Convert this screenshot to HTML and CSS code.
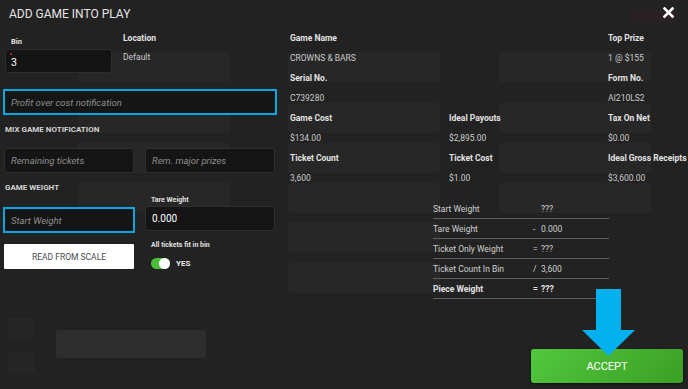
FILE: index.html
```html
<!DOCTYPE html>
<html lang="en">
  <head>
    <title>Add Game Into Play</title>
    <meta charset="UTF-8" />
    <meta name="viewport" content="width=device-width, initial-scale=1.0" />
    <link rel="stylesheet" href="styles.css">
  </head>
  <body>
    <!-- dimmed page behind the modal -->
    <div class="backdrop">
      <div class="ghost" style="left:78px;top:52px"></div>
      <div class="ghost" style="left:78px;top:103px"></div>
      <div class="ghost" style="left:78px;top:143px"></div>
      <div class="ghost" style="left:78px;top:182px"></div>
      <div class="ghost" style="left:288px;top:52px"></div>
      <div class="ghost" style="left:288px;top:103px"></div>
      <div class="ghost" style="left:288px;top:143px"></div>
      <div class="ghost" style="left:288px;top:183px"></div>
      <div class="ghost" style="left:288px;top:222px"></div>
      <div class="ghost" style="left:288px;top:263px"></div>
      <div class="ghost" style="left:499px;top:52px"></div>
      <div class="ghost" style="left:499px;top:103px"></div>
      <div class="ghost" style="left:499px;top:143px"></div>
      <div class="ghost" style="left:499px;top:183px"></div>
      <div class="ghost light" style="left:56px;top:330px"></div>
      <div class="ghost small" style="left:8px;top:318px"></div>
      <div class="ghost small" style="left:8px;top:352px"></div>
      <div class="ghost red" style="left:630px;top:10px"></div>
    </div>

    <div class="modal">
      <header class="modal-head">
        <h1>ADD GAME INTO PLAY</h1>
        <button class="close" aria-label="Close">
          <svg width="11" height="11" viewBox="0 0 11 11">
            <path d="M1.5 1.5 L9.5 9.5 M9.5 1.5 L1.5 9.5" stroke="#fff" stroke-width="2.6" stroke-linecap="square" />
          </svg>
        </button>
      </header>

      <div class="modal-body">
        <section class="form-col">
          <div class="row-top">
            <div class="bin-field">
              <label for="bin">Bin</label>
              <div class="bin-box">
                <span class="req"></span>
                <input type="text" id="bin" value="3" />
              </div>
            </div>
            <div class="loc-field">
              <div class="lbl">Location</div>
              <div class="val">Default</div>
            </div>
          </div>

          <input class="field wide focus" type="text" placeholder="Profit over cost notification" />

          <h2>MIX GAME NOTIFICATION</h2>
          <div class="pair">
            <input class="field" type="text" placeholder="Remaining tickets" />
            <input class="field" type="text" placeholder="Rem. major prizes" />
          </div>

          <h2>GAME WEIGHT</h2>
          <div class="pair weight">
            <div class="stack">
              <input class="field focus start" type="text" placeholder="Start Weight" />
              <button class="scale-btn">READ FROM SCALE</button>
            </div>
            <div class="stack">
              <label class="mini" for="tare">Tare Weight</label>
              <input class="field tare" id="tare" type="text" value="0.000" />
              <div class="mini fit">All tickets fit in bin</div>
              <div class="toggle-row">
                <span class="toggle"><span class="knob"></span></span>
                <span class="yes">YES</span>
              </div>
            </div>
          </div>
        </section>

        <section class="info-col">
          <div class="info-grid">
            <div class="cell"><div class="lbl">Game Name</div><div class="val">CROWNS &amp; BARS</div></div>
            <div class="cell"></div>
            <div class="cell"><div class="lbl">Top Prize</div><div class="val">1 @ $155</div></div>

            <div class="cell"><div class="lbl">Serial No.</div><div class="val">C739280</div></div>
            <div class="cell"></div>
            <div class="cell"><div class="lbl">Form No.</div><div class="val">AI210LS2</div></div>

            <div class="cell"><div class="lbl">Game Cost</div><div class="val">$134.00</div></div>
            <div class="cell"><div class="lbl">Ideal Payouts</div><div class="val">$2,895.00</div></div>
            <div class="cell"><div class="lbl">Tax On Net</div><div class="val">$0.00</div></div>

            <div class="cell"><div class="lbl">Ticket Count</div><div class="val">3,600</div></div>
            <div class="cell"><div class="lbl">Ticket Cost</div><div class="val">$1.00</div></div>
            <div class="cell"><div class="lbl">Ideal Gross Receipts</div><div class="val">$3,600.00</div></div>
          </div>

          <div class="calc">
            <div class="calc-row"><span class="name">Start Weight</span><span class="op"></span><span>???</span></div>
            <div class="calc-row"><span class="name">Tare Weight</span><span class="op">-</span><span>0.000</span></div>
            <div class="calc-row"><span class="name">Ticket Only Weight</span><span class="op">=</span><span>???</span></div>
            <div class="calc-row"><span class="name">Ticket Count In Bin</span><span class="op">/</span><span>3,600</span></div>
            <div class="calc-row total"><span class="name">Piece Weight</span><span class="op">=</span><span>???</span></div>
          </div>
        </section>
      </div>

      <footer class="modal-foot">
        <button class="accept">ACCEPT</button>
      </footer>

      <svg class="arrow" width="53" height="67" viewBox="0 0 53 67">
        <rect x="14" y="0" width="25" height="42" fill="#03b1ef" />
        <polygon points="0,41 53,41 26.5,67" fill="#03b1ef" />
      </svg>
    </div>
  </body>
</html>
```

FILE: styles.css
```css
body {
  font-family: Roboto, "Liberation Sans", sans-serif;
  margin: 0;
  background-color: #222;
  color: #d6d6d6;
  height: 100vh;
  overflow: hidden;
  position: relative;
}
.backdrop {
  position: absolute;
  inset: 0;
}
.ghost {
  position: absolute;
  width: 152px;
  height: 30px;
  background-color: #272727;
  border-radius: 2px;
}
.ghost.light {
  width: 150px;
  height: 28px;
  background-color: #2d2d2d;
}
.ghost.small {
  width: 27px;
  height: 21px;
  background-color: #262626;
}
.ghost.red {
  width: 48px;
  height: 12px;
  background-color: #2b2123;
}

.modal {
  position: relative;
  height: 100vh;
  display: flex;
  flex-direction: column;
}
.modal-head {
  height: 28px;
  display: flex;
  align-items: center;
  justify-content: space-between;
  padding: 0 14px 0 9px;
}
h1 {
  margin: 0;
  font-size: 12px;
  font-weight: 400;
  color: #e4e4e4;
}
.close {
  background: none;
  border: none;
  padding: 0;
  margin-top: -4px;
  display: flex;
}

.modal-body {
  display: flex;
}
.form-col {
  width: 272px;
  padding-left: 4px;
  display: flex;
  flex-direction: column;
}
.row-top {
  display: flex;
  padding-top: 4px;
}
.bin-field {
  width: 119px;
  display: flex;
  flex-direction: column;
}
.bin-field label {
  margin: 5px 0 0 7px;
  font-size: 7.5px;
  font-weight: 700;
  line-height: 10px;
  color: #e0e0e0;
}
.bin-box {
  position: relative;
  margin: 2px 0 0 1px;
  width: 107px;
  height: 24px;
  box-sizing: border-box;
  background-color: #141414;
  border: 1px solid #2e2e2e;
  border-radius: 3px;
}
.bin-box input {
  width: 100%;
  height: 100%;
  box-sizing: border-box;
  background: none;
  border: none;
  padding: 2px 0 0 5px;
  color: #fff;
  font-family: inherit;
  font-size: 10.5px;
}
.req {
  position: absolute;
  left: 4px;
  top: 3px;
  width: 2px;
  height: 2px;
  border-radius: 50%;
  background-color: #d0203a;
}
.loc-field .lbl,
.cell .lbl {
  font-size: 8.5px;
  font-weight: 700;
  color: #e2e2e2;
}
.loc-field .lbl {
  line-height: 12px;
}
.loc-field .val {
  margin-top: 7px;
  font-size: 8.5px;
  line-height: 12px;
  color: #c9c9c9;
}

.field {
  box-sizing: border-box;
  height: 25px;
  background-color: #151515;
  border: 1px solid #2e2e2e;
  border-radius: 3px;
  padding: 0 6px;
  color: #fff;
  font-family: inherit;
  font-size: 9.5px;
  outline: none;
}
.field::placeholder {
  color: #8e8e8e;
  font-style: italic;
}
.field.focus {
  border: 2px solid #0aa6e2;
  border-radius: 0;
}
.field.wide {
  width: 274px;
  height: 26px;
  margin: 16px -1px 0;
}
h2 {
  margin: 9px 0 0 1px;
  font-size: 8px;
  font-weight: 700;
  line-height: 12px;
  color: #d2d2d2;
}
.pair {
  display: grid;
  grid-template-columns: 130px 130px;
  gap: 11px;
  margin-top: 12px;
}
.pair.weight {
  margin-top: 1px;
}
.stack {
  display: flex;
  flex-direction: column;
}
.field.start {
  margin: 12px 0 0 -1px;
  width: 132px;
  height: 26px;
}
.mini {
  margin-left: 6px;
  font-size: 7px;
  font-weight: 700;
  line-height: 10px;
  color: #e0e0e0;
}
.field.tare {
  margin-top: 1px;
  font-size: 10px;
}
.scale-btn {
  margin-top: 11px;
  height: 25px;
  background-color: #fff;
  border: none;
  border-radius: 1px;
  color: #4a4a4a;
  font-family: inherit;
  font-size: 8.5px;
}
.fit {
  margin-top: 9px;
}
.toggle-row {
  display: flex;
  align-items: center;
  gap: 6px;
  margin: 8px 0 0 6px;
}
.toggle {
  position: relative;
  width: 19px;
  height: 11px;
  border-radius: 6px;
  background-color: #4cbd3a;
}
.knob {
  position: absolute;
  right: 0;
  top: 0;
  width: 11px;
  height: 11px;
  border-radius: 50%;
  background-color: #fff;
}
.yes {
  font-size: 8px;
  font-weight: 700;
  color: #e6e6e6;
}

.info-col {
  margin-left: 14px;
  display: flex;
  flex-direction: column;
}
.info-grid {
  display: grid;
  grid-template-columns: 159px 159px 90px;
}
.cell .lbl {
  line-height: 20px;
}
.cell .val {
  font-size: 8.5px;
  line-height: 20px;
  color: #c9c9c9;
}
.calc {
  margin: 11px 0 0 143px;
  width: 176px;
}
.calc-row {
  display: flex;
  height: 20px;
  box-sizing: border-box;
  align-items: center;
  border-bottom: 1px solid #5e5e5e;
  font-size: 8.5px;
  color: #cfcfcf;
}
.calc-row .name {
  width: 100px;
}
.calc-row .op {
  width: 8px;
}
.calc-row.total {
  font-weight: 700;
  color: #e2e2e2;
}

.modal-foot {
  margin-top: auto;
  display: flex;
  justify-content: flex-end;
  padding: 0 5px 6px 0;
}
.accept {
  width: 152px;
  height: 34px;
  border: none;
  border-radius: 3px;
  background: linear-gradient(135deg, #52c73e, #3b9f25);
  box-shadow: 0 1px 3px rgba(0, 0, 0, 0.6);
  color: #fff;
  font-family: inherit;
  font-size: 11px;
}
.arrow {
  position: absolute;
  left: 582px;
  top: 289px;
}
```
